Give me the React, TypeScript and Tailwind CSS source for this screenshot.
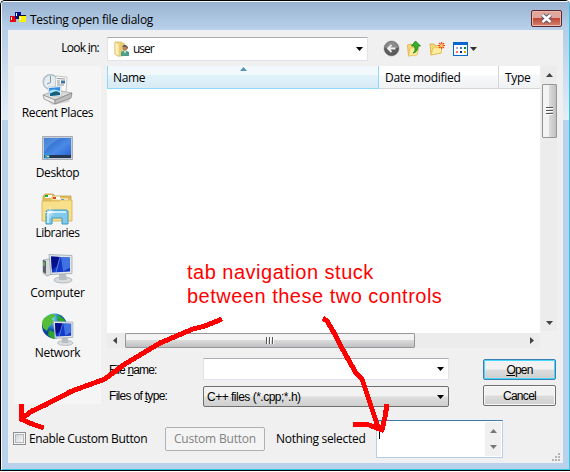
import React from "react";

const ui = "font-['Open_Sans','Noto_Sans',sans-serif]";
const sans = "font-['Liberation_Sans',Arial,sans-serif]";

function Arrow({ dir, className = "" }: { dir: "up" | "down" | "left" | "right"; className?: string }) {
  const d = { up: "M0 4h7L3.5 0z", down: "M0 0h7L3.5 4z", left: "M4 0v7L0 3.5z", right: "M0 0v7l4-3.5z" }[dir];
  const vertical = dir === "up" || dir === "down";
  return (
    <svg className={`block shrink-0 ${className}`} width={vertical ? 7 : 4} height={vertical ? 4 : 7}>
      <path d={d} fill="currentColor" />
    </svg>
  );
}

function AppIcon() {
  return (
    <svg width="16" height="11" className="block shrink-0" shapeRendering="crispEdges">
      <path fill="#e8000a" d="M0 4h6v6H0z" />
      <path fill="#00108c" d="M5 0h6v7H5z" />
      <path fill="#fff200" d="M9 4h7v6H9z" />
      <path fill="#15153a" d="M9 3h7v1H9z" />
      <path fill="#fff" d="M1 5h1v3H1zM6 1h1v3H6zM10 5h1v3h-1z" />
    </svg>
  );
}

function UserFolder() {
  return (
    <svg width="16" height="16" viewBox="0 0 16 16" className="shrink-0">
      <path d="M1 1h7l1 2v12H4L1 13z" fill="#f2dc8c" stroke="#cdb25c" strokeWidth=".7" />
      <path d="M1 1l4 2v12.500L1 13z" fill="#fff0af" stroke="#d3ba69" strokeWidth=".6" />
      <path d="M6 2h5v12H6z" fill="#e6cd75" />
      <circle cx="11" cy="7" r="2.500" fill="#b98258" />
      <path d="M8 6q1-3 4-2l2 2v2l-2-2z" fill="#6c625a" />
      <path d="M7 15v-4q4-3 8 0v4z" fill="#4b9e88" />
      <path d="M10 10h2l-1 3z" fill="#e9f5ef" />
    </svg>
  );
}

function BackIcon() {
  return (
    <svg width="17" height="17" viewBox="0 0 17 17" className="shrink-0">
      <circle cx="8.500" cy="8.500" r="7" fill="#5d5d5d" stroke="#484848" />
      <path d="M2 8a6.500 6.500 0 0 1 13 0z" fill="#8c8c8c" />
      <circle cx="8.500" cy="8.500" r="7.700" fill="none" stroke="#aaa" strokeWidth=".5" />
      <path d="M12.500 8.500h-7M8.500 5L5 8.500 8.500 12" fill="none" stroke="#eee" strokeWidth="1.800" />
    </svg>
  );
}

function UpIcon() {
  return (
    <svg width="14" height="17" viewBox="0 0 14 17" className="shrink-0">
      <path d="M.5 5l4-1 1 2 4-1v9l-8 2z" fill="#f8dc78" stroke="#d4ab3e" strokeWidth=".8" />
      <path d="M3 8l9-1-2 8-8.500 1z" fill="#ffeb9d" stroke="#dfba50" strokeWidth=".7" />
      <path d="M6 13q3-1 1.500-7H4.500L8.500 1l5 5H11q0 6-5 7z" fill="#36b32b" stroke="#187d17" strokeWidth=".8" />
    </svg>
  );
}

function NewFolderIcon() {
  return (
    <svg width="17" height="15" viewBox="0 0 17 15" className="block shrink-0">
      <path d="M1 3h4l1 1.500h6V12L2 14z" fill="#f5d878" stroke="#d5ab43" strokeWidth=".8" />
      <path d="M4 7l9-1-1 6-10 2z" fill="#ffed9e" stroke="#e0b74c" strokeWidth=".7" />
      <path d="M12.500 1v7M9 4.500h7M10 2l5 5M15 2l-5 5" stroke="#f04b20" strokeWidth="1.200" />
      <circle cx="12.500" cy="4.500" r="1.500" fill="#ffd36b" />
    </svg>
  );
}

function ViewIcon() {
  return (
    <svg width="15" height="14" className="block shrink-0" shapeRendering="crispEdges">
      <path fill="#0868cf" d="M0 0h15v14H0z" />
      <path fill="#fff" d="M1 3h13v10H1z" />
      <path fill="#b0a5ce" d="M3 5h2v2H3z" />
      <path fill="#3e78ca" d="M7 5h2v2H7z" />
      <path fill="#168521" d="M11 5h2v2h-2z" />
      <path fill="#ff7049" d="M3 9h2v2H3z" />
      <path fill="#102889" d="M7 9h2v2H7z" />
      <path fill="#d8a400" d="M11 9h2v2h-2z" />
    </svg>
  );
}

function RecentIcon() {
  return (
    <svg width="32" height="32" viewBox="0 0 32 32">
      <path d="M1 23l7 4 22-7-3 9-17 3z" fill="#000" opacity=".12" />
      <circle cx="8.500" cy="9" r="7.300" fill="#e4edf1" stroke="#aebdc5" strokeWidth="1.400" />
      <path d="M8.500 3v6.500L5 11" fill="none" stroke="#8798a2" />
      <path d="M14 3l11 1-1 16-11-2z" fill="#fafafa" stroke="#b9b9b9" strokeWidth=".8" />
      <path d="M15 5.500l8 .5M15 8h3M15 10h3M15 12h7" stroke="#8f9598" strokeWidth="1" />
      <path d="M19 7.500h4v3h-4z" fill="#41759b" />
      <path d="M1 22l13-5 16 3-17 7z" fill="#d9dada" stroke="#9c9c9c" strokeWidth=".7" />
      <path d="M6 14l13-1v10l-12 1z" fill="#fff" stroke="#b3bdc2" strokeWidth=".6" />
      <path d="M7 15l11-1v8l-10 1z" fill="#2d8ee5" />
      <path d="M7.500 18q4-3 10.500 0v2H8z" fill="#abe3ff" />
      <path d="M8 21q6-5 10-1v2l-10 1z" fill="#155f79" />
      <path d="M1 22l12 5v4L2 26z" fill="#ececec" stroke="#939393" strokeWidth=".8" />
      <path d="M13 27l17-7-1 5-16 6z" fill="#bebebe" stroke="#858585" strokeWidth=".8" />
    </svg>
  );
}

function DesktopIcon() {
  return (
    <svg width="32" height="32" viewBox="0 0 32 32">
      <defs>
        <linearGradient id="desk" x2="1" y2="1">
          <stop stopColor="#2060be" />
          <stop offset=".55" stopColor="#4b8ae7" />
          <stop offset="1" stopColor="#225ed0" />
        </linearGradient>
      </defs>
      <path d="M.5 3.500h30v23H.5z" fill="#c3cbd6" stroke="#a7adb7" />
      <path d="M2 5h27v20H2z" fill="url(#desk)" />
      <path d="M2 5h17Q8 10 2 19z" fill="#8db9f5" opacity=".35" />
      <path d="M2 22h27v3H2z" fill="#26364f" />
      <circle cx="5" cy="23" r="2.600" fill="#279bd4" />
      <path d="M4 22h1v1H4z" fill="#ff893c" />
      <path d="M5 23h2v1H5z" fill="#ffe44a" />
    </svg>
  );
}

function LibrariesIcon() {
  return (
    <svg width="33" height="32" viewBox="0 0 33 32">
      <path d="M2 3l2-2h8l2 2h16v24H2z" fill="#e1bd59" stroke="#bd963d" strokeWidth=".7" />
      <path d="M4 2h7v3H4z" fill="#fff" />
      <path d="M4 2h3v2H4z" fill="#13b331" />
      <path d="M10 4h9l1 2h10v21H10z" fill="#f0cf70" />
      <path d="M12 3.500h7v3h-7z" fill="#fff" />
      <path d="M12 4h3v2h-3z" fill="#d44626" />
      <path d="M19 5.500h8v3h-8z" fill="#fff" />
      <path d="M20 6h3v2h-3z" fill="#2e8de4" />
      <path d="M1 8h17l2-1h11v21H1z" fill="#f8df8a" stroke="#d2ae52" strokeWidth=".8" />
      <path d="M5 31V19q0-2 2-2h18q2 0 2 2v12h-6v-6H11v6z" fill="#83c9e9" stroke="#3d98c3" />
      <path d="M6 19q0-1 2-1h17v2H8v10H6z" fill="#c8edfc" />
      <path d="M9 14v11M4 19.500h10M6 16.500l6 6M12 16.500l-6 6" stroke="#fff" strokeWidth=".7" />
    </svg>
  );
}

function MonitorShape() {
  return (
    <>
      <ellipse cx="22" cy="27" rx="9" ry="3" fill="#dadddf" stroke="#a5abae" strokeWidth=".8" />
      <path d="M18 21h7l1 6h-8z" fill="#b8bdc1" />
      <path d="M8 1.500l23 1v18l-21 1z" fill="#dfe5e9" stroke="#9ba7af" strokeWidth=".8" />
      <path d="M10 3.500l19 1v14l-18 1z" fill="#1439c7" />
      <path d="M10 3.500l9 .5-3 9-5 4z" fill="#050e8b" />
      <path d="M20 4l9 .5v10l-7 4z" fill="#4f86eb" opacity=".75" />
      <path d="M19 4l-4 15" stroke="#87b6ff" strokeWidth=".6" />
    </>
  );
}

function ComputerIcon() {
  return (
    <svg width="33" height="32" viewBox="0 0 33 32">
      <path d="M2 7l6-1 3 1v14l-5 2-4-3z" fill="#d6dadd" stroke="#9ba2a7" strokeWidth=".8" />
      <path d="M2 7l3 1v13l-3-2z" fill="#596168" />
      <path d="M2 10h2M2 12h2" stroke="#69eb5b" />
      <MonitorShape />
    </svg>
  );
}

function NetworkIcon() {
  return (
    <svg width="33" height="34" viewBox="0 0 33 34">
      <defs>
        <radialGradient id="globe" cx=".35" cy=".2">
          <stop stopColor="#caf6ff" />
          <stop offset=".35" stopColor="#4bb8e0" />
          <stop offset="1" stopColor="#0b459e" />
        </radialGradient>
      </defs>
      <circle cx="13.500" cy="14" r="12.500" fill="url(#globe)" />
      <path d="M3 6l7-4 5 1-4 4 2 3-5 4-2 5-4-3-1-6z" fill="#55bd39" />
      <path d="M17 3l6 4 2 5-5-1-4-3zM8 18l5 2 3 6-4 1-5-4z" fill="#2ba62b" />
      <g transform="translate(5.500 8) scale(.85)">
        <MonitorShape />
      </g>
    </svg>
  );
}

const places = [
  { label: "Recent Places", icon: <RecentIcon />, cls: "tracking-[-0.4px]" },
  { label: "Desktop", icon: <DesktopIcon />, cls: "tracking-[-0.4px]" },
  { label: "Libraries", icon: <LibrariesIcon />, cls: "tracking-[-0.5px]" },
  { label: "Computer", icon: <ComputerIcon />, cls: "tracking-[-0.25px]" },
  { label: "Network", icon: <NetworkIcon />, cls: "tracking-[-0.35px]" },
];

function TitleBar() {
  return (
    <header className="flex h-[28px] items-center bg-linear-to-b from-[#99b4d1] to-[#b9d1ea] pl-2 pr-[7px]">
      <span className="mt-[3px]">
        <AppIcon />
      </span>
      <h1 className="ml-[4px] mt-[7px] flex-1 text-[12px] leading-4 tracking-[-0.24px] text-black">Testing open file dialog</h1>
      <button className="mt-[5px] flex h-[17px] w-[31px] items-center justify-center rounded-[2px] border border-[#5c2730] bg-linear-to-b from-[#e2a59b] from-45% via-[#bd4636] via-50% to-[#d38370] shadow-[inset_0_0_0_1px_#e9b8ad]">
        <svg width="13" height="11" viewBox="0 0 13 11">
          <path d="M2.500 2l8 7M10.500 2l-8 7" stroke="#535666" strokeWidth="4.400" />
          <path d="M2.500 2l8 7M10.500 2l-8 7" stroke="#fff" strokeWidth="2.600" />
        </svg>
      </button>
    </header>
  );
}

function LookIn() {
  return (
    <div className="flex h-[36px] pt-[7px]">
      <label className="w-[91px] pt-[2px] text-right text-[12px] leading-[18px] tracking-[-0.75px]">
        Look <u>i</u>n:
      </label>
      <div className="ml-[8px] flex h-[24px] w-[261px] items-center border border-[#e2e3ea] border-t-[#abadb3] bg-white pl-[6px] pr-[4px]">
        <UserFolder />
        <span className="ml-[3px] flex-1 text-[12px] leading-4 tracking-[-1px]">user</span>
        <Arrow dir="down" />
      </div>
      <div className="ml-[15px] flex h-[23px] items-center gap-[7px]">
        <BackIcon />
        <UpIcon />
        <span className="ml-px">
          <NewFolderIcon />
        </span>
        <ViewIcon />
        <Arrow dir="down" className="-ml-[5px] text-[#333]" />
      </div>
    </div>
  );
}

const plainHeader = "bg-linear-to-b from-white from-40% via-[#f7f8fa] via-42% to-[#f1f2f4]";
const grip = "h-[7px] w-[2px] border-r border-white bg-[#555]";

function FileList() {
  return (
    <section className="flex h-[282px] w-[450px]">
      <div className="flex w-[433px] flex-col">
        <div className="flex h-[267px] flex-col items-start bg-white">
          <div className="flex h-[23px] w-[433px] text-[12px] leading-[23px] tracking-[-0.35px]">
            <div className="relative w-[272px] border border-t-0 border-[#90d9f8] bg-linear-to-b from-[#f2f9fd] from-40% via-[#e1f2f9] via-42% to-[#d7ebf5] pl-[5px]">
              Name
              <Arrow dir="up" className="absolute left-[132px] top-[1px] text-[#5593b5]" />
            </div>
            <div className={`w-[120px] border-b border-r border-[#d5d5d5] pl-[6px] tracking-[-0.3px] ${plainHeader}`}>Date modified</div>
            <div className={`w-[41px] whitespace-nowrap border-b border-[#d5d5d5] pl-[6px] ${plainHeader}`}>Type</div>
          </div>
        </div>
        <div className="flex h-[15px] items-center bg-[#ececec]">
          <Arrow dir="left" className="ml-[6px] text-[#444]" />
          <div className="ml-[8px] flex h-[15px] w-[290px] items-center justify-center gap-px rounded-[1px] border border-[#979797] bg-linear-to-b from-[#f3f3f3] from-45% via-[#dadada] via-50% to-[#bfc0c3]">
            <i className={grip} />
            <i className={grip} />
            <i className={grip} />
          </div>
          <Arrow dir="right" className="ml-auto mr-[6px] text-[#444]" />
        </div>
      </div>
      <div className="ml-px flex h-[265px] w-[16px] flex-col items-center bg-[#ececec]">
        <Arrow dir="up" className="mt-[7px] text-[#444]" />
        <div className="mt-[7px] flex h-[54px] w-[15px] flex-col items-center justify-center gap-px rounded-[1px] border border-[#979797] bg-linear-to-r from-[#f3f3f3] from-45% via-[#dadada] via-50% to-[#bfc0c3]">
          <i className="h-[2px] w-[7px] border-b border-white bg-[#555]" />
          <i className="h-[2px] w-[7px] border-b border-white bg-[#555]" />
          <i className="h-[2px] w-[7px] border-b border-white bg-[#555]" />
        </div>
        <Arrow dir="down" className="mb-[6px] mt-auto text-[#444]" />
      </div>
    </section>
  );
}

const face = "bg-linear-to-b from-[#f2f2f2] from-48% via-[#dddddd] via-52% to-[#cfcfcf]";

function Fields() {
  return (
    <div className={`flex pt-[10px] text-[12px] ${sans}`}>
      <div className="w-[96px] pl-[2px] text-[12px]">
        <p className="h-[26px] leading-[24px] tracking-[-0.85px]">
          File <u>n</u>ame:
        </p>
        <p className="leading-[24px] tracking-[-0.7px]">
          Files of <u>t</u>ype:
        </p>
      </div>
      <div className="w-[246px]">
        <div className="flex h-[22px] items-center justify-end border border-[#e2e3ea] border-t-[#abadb3] bg-white pr-[4px]">
          <Arrow dir="down" />
        </div>
        <div className={`mt-[6px] flex h-[21px] items-center justify-between rounded-[2px] border border-[#707070] pl-[3px] pr-[4px] ${face}`}>
          <span className="tracking-[-0.5px]">C++ files (*.cpp;*.h)</span>
          <Arrow dir="down" />
        </div>
      </div>
      <div className="ml-[34px] flex flex-col gap-[5px] pt-px">
        <button className={`h-[21px] w-[73px] rounded-[2px] border border-[#3c7fb1] pt-px tracking-[-0.8px] shadow-[inset_0_0_0_1px_#46d8fb] ${face}`}>
          <u>O</u>pen
        </button>
        <button className={`h-[21px] w-[73px] rounded-[2px] border border-[#707070] pt-px tracking-[-0.7px] shadow-[inset_0_0_0_1px_#f8f8f8] ${face}`}>Cancel</button>
      </div>
    </div>
  );
}

function CustomRow() {
  return (
    <div className="flex h-[59px] pl-[5px] text-[12px] leading-4">
      <span className="mt-[28px] size-[13px] border border-[#8e8f8f] bg-[#f4f4f4] p-px">
        <span className="block size-[9px] border border-[#b5b9be] bg-linear-to-br from-[#cfd3d9] to-[#f7f7f7]" />
      </span>
      <label className="ml-[3px] mt-[27px] w-[136px] tracking-[-0.37px]">Enable Custom Button</label>
      <button className="mt-[23px] h-[24px] w-[100px] rounded-[2px] border border-[#adb2b5] bg-[#f4f4f4] tracking-[-0.2px] text-[#838383]">Custom Button</button>
      <span className="ml-[11px] mt-[27px] w-[100px] tracking-[-0.3px]">Nothing selected</span>
      <div className="mt-[16px] flex h-[38px] w-[127px] justify-between border border-[#b5cfe7] border-t-[#3d7bad] bg-white p-px">
        <i className="ml-px mt-[2px] h-[15px] w-px bg-black" />
        <div className="flex w-[16px] flex-col items-center justify-between bg-[#f0f0f0] py-[7px] text-[#777]">
          <Arrow dir="up" />
          <Arrow dir="down" />
        </div>
      </div>
      <svg width="8" height="8" className="ml-auto mr-[3px] mt-[49px]" shapeRendering="crispEdges">
        <path fill="#b5b5b5" d="M6 0h2v2H6zM3 3h2v2H3zM6 3h2v2H6zM0 6h2v2H0zM3 6h2v2H3zM6 6h2v2H6z" />
      </svg>
    </div>
  );
}

function Annotation() {
  return (
    <div className="pointer-events-none absolute inset-0 text-[#f00]">
      <p className={`absolute left-[187px] top-[260px] whitespace-pre text-[20px] leading-[24px] tracking-[0.5px] ${sans}`}>{"tab navigation stuck\nbetween these two controls"}</p>
      <svg width="570" height="472" className="absolute inset-0" fill="none" stroke="currentColor" strokeWidth="5" shapeRendering="crispEdges" strokeLinejoin="round">
        <path d="M222 319L205 326 193 329 160 343 125 364 105 379 72 391 45 405 32 411 21 419M22 404L21 419 32 424 44 428" />
        <path d="M323 318L327 321 333 331 343 350 356 373 362 379 370 403 378 427M353 424L369 425 382 430 385 417 387 404" />
      </svg>
    </div>
  );
}

export default function App() {
  return (
    <main className={`relative h-[472px] w-[570px] overflow-hidden bg-white text-black ${ui}`}>
      <div className="h-[471px] w-[570px] rounded-t-[5px] border border-r-0 border-black bg-[#b9d1ea]">
        <div className="h-[469px] rounded-t-[4px] border border-[#f5f9fc] border-b-[#35c5e6] border-r-[#35c5e6] bg-[#b9d1ea]">
          <TitleBar />
          <div className="flex h-[433px]">
            <div className="h-[90px] w-[6px] bg-linear-to-b from-[#b5cde6] to-[#e5eef8]" />
            <div className="w-[555px] bg-[#f0f0f0]">
              <LookIn />
              <div className="flex h-[338px] pl-[6px]">
                <nav className="flex w-[87px] flex-col bg-[#f5f5f5] pt-[6px]">
                  {places.map((p) => (
                    <div key={p.label} className="flex h-[60px] flex-col items-center">
                      <div className="flex h-[33px] items-center">{p.icon}</div>
                      <span className={`whitespace-nowrap text-[12px] leading-4 ${p.cls}`}>{p.label}</span>
                    </div>
                  ))}
                </nav>
                <div className="ml-[6px] w-[450px]">
                  <FileList />
                  <Fields />
                </div>
              </div>
              <CustomRow />
            </div>
            <div className="h-[90px] w-[6px] bg-linear-to-b from-[#b5cde6] to-[#e5eef8]" />
          </div>
        </div>
      </div>
      <Annotation />
    </main>
  );
}
